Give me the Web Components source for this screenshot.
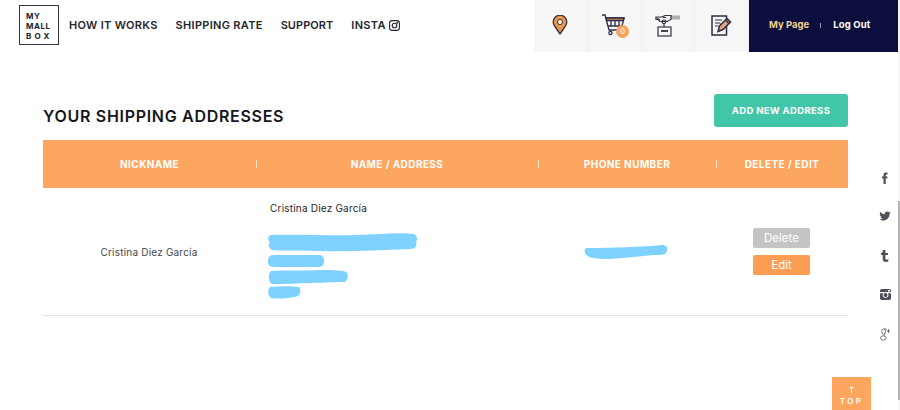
<!DOCTYPE html>
<html>
<head>
<meta charset="utf-8">
<style>
html, body { margin: 0; padding: 0; background: #fff; overflow: hidden; }
body { width: 900px; height: 410px; font-family: Inter, "Liberation Sans", sans-serif; color: #1b1b22; position: relative; }
</style>
</head>
<body>
<site-header></site-header>
<address-page></address-page>
<social-rail></social-rail>
<top-button></top-button>
<fake-scrollbar></fake-scrollbar>

<script>
class SiteHeader extends HTMLElement {
    constructor() {
        super();
        this.attachShadow({ mode: 'open' });
    }

    connectedCallback() {
        this.shadowRoot.innerHTML = `
            <style>
                :host { display: flex; height: 52px; width: 898px; padding-left: 19px; box-sizing: border-box; align-items: flex-start; }
                .logo {
                    width: 40px; height: 40px; margin-top: 5px; box-sizing: border-box;
                    border: 1px solid #33334a; padding: 5px 0 0 6px;
                    font-size: 8px; font-weight: 700; line-height: 10px; color: #22222c; letter-spacing: .5px;
                }
                .logo .wide { letter-spacing: 3.2px; }
                nav { display: flex; gap: 18px; margin-left: 10px; height: 50px; align-items: center; font-size: 11px; font-weight: 600; letter-spacing: .3px; color: #26262e; white-space: nowrap; }
                nav span { display: flex; align-items: center; gap: 3px; }
                nav .tight { letter-spacing: .05px; }
                .right { display: flex; margin-left: auto; height: 52px; }
                .account {
                    width: 149px; background: #0c0f3e; display: flex; align-items: center; padding: 0 0 4px 20px; box-sizing: border-box;
                    font-size: 9.5px; font-weight: 700; color: #fff; white-space: nowrap; letter-spacing: .15px;
                }
                .account b { color: #eed48c; font-weight: 700; letter-spacing: 0; }
                .account i { width: 1px; height: 5px; background: #9a9ab0; margin: 2px 12px 0 11px; }
            </style>
            <div class="logo">MY<br>MALL<br><span class="wide">BOX</span></div>
            <nav>
                <span>HOW IT WORKS</span>
                <span>SHIPPING RATE</span>
                <span class="tight">SUPPORT</span>
                <span>INSTA
                    <svg width="11" height="11" viewBox="0 0 11 11" fill="none" stroke="#26262e" stroke-width="1.1"><rect x=".6" y=".6" width="9.8" height="9.8" rx="2.6"/><circle cx="5.5" cy="5.5" r="2.3"/><circle cx="8.2" cy="2.8" r=".4"/></svg>
                </span>
            </nav>
            <div class="right">
                <icon-cell>
                    <svg width="16" height="20" viewBox="0 0 16 20"><path d="M8 19C5 14 1.2 10.8 1.2 7A6.8 6.8 0 0 1 14.8 7C14.8 10.8 11 14 8 19Z" fill="#e8954f" stroke="#33303a" stroke-width="1.3"/><circle cx="8" cy="7" r="2.6" fill="#fbf3ea" stroke="#33303a" stroke-width="1"/></svg>
                </icon-cell>
                <icon-cell>
                    <span style="position:relative;display:block;width:30px;height:22px;left:2px">
                        <svg width="28" height="22" viewBox="0 0 28 22" fill="none" stroke="#2c2c44" stroke-width="1.3" style="position:absolute;left:0;top:0"><path d="M1 1H4L8 16H20"/><path d="M5 4H23L21 12H7.2"/><path d="M5 4H23L22.4 6.5H5.7Z" fill="#d9925a"/><path d="M10 7V12M14 7V12M18 7V12"/><circle cx="9.5" cy="19" r="1.6"/><circle cx="18" cy="19" r="1.6"/></svg>
                        <span style="position:absolute;left:15px;top:11px;width:13px;height:13px;border-radius:50%;background:#f9a259;color:#fff;font-size:7.5px;line-height:13px;text-align:center;font-weight:500">0</span>
                    </span>
                </icon-cell>
                <icon-cell>
                    <svg width="26" height="23" viewBox="0 0 26 23" fill="none" stroke="#33333c" stroke-width="1.2"><path d="M15 1.500H25V5.500H16Z" fill="#b0b0b0" stroke="none"/><path d="M1 3H7L10 1.500H16V5.500L12 7.500H5L3 5.500H1Z" fill="#f2f2f2"/><path d="M2 4.500L5 5.500M8 3.500L11 3.500"/><circle cx="9" cy="7.800" r="1.800"/><path d="M9 9.500V13"/><rect x="3" y="13" width="13" height="9"/><path d="M6 17H13" stroke-width="1.800"/></svg>
                </icon-cell>
                <icon-cell>
                    <svg width="21" height="21" viewBox="0 0 21 21" fill="none" stroke="#2c2c44" stroke-width="1.500"><path d="M15.500 9V20H1V1H15.500V4"/><path d="M4 5H11M4 8H9.500M4 11H7.500" stroke-width="1.100"/><path d="M7 16.500L8.500 11L16 3.500L19.500 7L12 14.500Z" fill="#e3a47c"/><path d="M14.500 5L18 8.500"/></svg>
                </icon-cell>
                <div class="account"><b>My Page</b><i></i>Log Out</div>
            </div>
        `;
    }
}

class IconCell extends HTMLElement {
    constructor() {
        super();
        this.attachShadow({ mode: 'open' }).innerHTML = `
            <style>
                :host { display: flex; width: 53.75px; height: 52px; background: #f6f6f6; align-items: center; justify-content: center; padding-bottom: 2px; box-sizing: border-box; border-right: 1px solid #eeeeee; }
            </style>
            <slot></slot>
        `;
    }
}

class AddressPage extends HTMLElement {
    constructor() {
        super();
        this.attachShadow({ mode: 'open' });
    }

    connectedCallback() {
        this.shadowRoot.innerHTML = `
            <style>
                :host { display: block; width: 805px; margin: 42px 0 0 43px; }
                .top { display: flex; justify-content: space-between; align-items: flex-end; height: 33px; margin-bottom: 13px; }
                h1 { margin: 0 0 1px; font-size: 16px; line-height: 20px; font-weight: 600; letter-spacing: .7px; color: #15151c; }
                button {
                    width: 134px; height: 33px; border: 0; padding: 0; border-radius: 3px; background: #41c7a8; color: #fff;
                    font: 700 9.5px Inter, "Liberation Sans", sans-serif; letter-spacing: .33px;
                }
            </style>
            <div class="top">
                <h1>YOUR SHIPPING ADDRESSES</h1>
                <button>ADD NEW ADDRESS</button>
            </div>
            <table-head></table-head>
            <address-row nickname="Cristina Diez García"></address-row>
        `;
    }
}

class TableHead extends HTMLElement {
    constructor() {
        super();
        this.attachShadow({ mode: 'open' }).innerHTML = `
            <style>
                :host {
                    display: grid; grid-template-columns: 213px 282px 178px 132px; height: 48px; background: #fca65f; align-items: center;
                    color: #fff; font-size: 10px; font-weight: 700; letter-spacing: .42px; text-align: center;
                }
                div { position: relative; }
                div + div::before { content: ""; position: absolute; left: 0; top: 2px; width: 1px; height: 8px; background: #ffe3c8; }
            </style>
            <div>NICKNAME</div>
            <div>NAME / ADDRESS</div>
            <div>PHONE NUMBER</div>
            <div>DELETE / EDIT</div>
        `;
    }
}

class AddressRow extends HTMLElement {
    constructor() {
        super();
        this.attachShadow({ mode: 'open' });
    }

    connectedCallback() {
        const name = this.getAttribute('nickname');
        this.shadowRoot.innerHTML = `
            <style>
                :host {
                    display: grid; grid-template-columns: 213px 282px 178px 132px; height: 128px; box-sizing: border-box;
                    border-bottom: 1px solid #e4e4e4; font-size: 10px; color: #3a3a42; align-items: center;
                }
                .nick { text-align: center; padding-right: 1px; color: #46464c; letter-spacing: .2px; }
                .addr { align-self: start; padding: 14px 0 0 14px; }
                .addr p { margin: 0 0 19px; line-height: 12px; color: #26262c; letter-spacing: .2px; }
                .addr svg, .phone svg { display: block; }
                .addr svg { margin-left: -2px; }
                .phone { padding-left: 46px; padding-top: 2px; }
                .actions { display: flex; flex-direction: column; gap: 7px; padding: 0 0 0 37px; }
                .actions span { display: block; width: 57px; height: 20px; line-height: 20px; border-radius: 2px; text-align: center; color: #fff; font-size: 11.5px; }
                .del { background: #c4c4c4; }
                .edit { background: #fd9c53; }
            </style>
            <div class="nick">${name}</div>
            <div class="addr">
                <p>${name}</p>
                <svg width="150" height="67" viewBox="0 0 150 67" fill="#7fd2ff">
                    <path d="M3 2C30 1 60 3 90 2C110 1 135 -1 146 1C149 2 150 7 148 9C149 12 148 16 143 16C110 17 80 19 50 18C30 17 12 18 4 17C0 15 0 11 2 9C-1 6 0 3 3 2Z"/>
                    <rect x="0" y="22" width="56" height="12" rx="5"/>
                    <path d="M3 38C20 37 40 38 50 37C60 37 75 37 78 39C81 41 80 47 77 49C60 49 30 51 4 51C0 49 0 40 3 38Z"/>
                    <path d="M2 54C10 53 25 53 31 54C33 56 33 61 30 63C20 66 8 66 3 65C-1 62 0 56 2 54Z"/>
                </svg>
            </div>
            <div class="phone">
                <svg width="84" height="15" viewBox="0 0 84 15" fill="#7fd2ff"><path d="M3 3C25 3 60 2 78 0C83 0 84 3 83 6C82 10 78 10 70 10C55 11 45 13 25 14C12 14 3 13 1 8C0 5 1 3 3 3Z"/></svg>
            </div>
            <div class="actions">
                <span class="del">Delete</span>
                <span class="edit">Edit</span>
            </div>
        `;
    }
}

class SocialRail extends HTMLElement {
    constructor() {
        super();
        this.attachShadow({ mode: 'open' }).innerHTML = `
            <style>
                :host { position: absolute; left: 877px; top: 172px; width: 16px; display: flex; flex-direction: column; align-items: center; }
                div { height: 39px; display: flex; justify-content: center; align-items: flex-start; }
                svg { display: block; }
            </style>
            <div><svg width="10" height="12" viewBox="0 0 10 12" fill="#50505a"><path d="M3.5 12V6.6H2V4.6H3.5V3C3.5 1.2 4.5 .5 6 .5H7.5V2.4H6.6C5.9 2.4 5.7 2.7 5.7 3.3V4.6H7.5L7.2 6.6H5.7V12Z"/></svg></div>
            <div><svg width="12" height="12" viewBox="0 0 24 24" fill="#50505a" style="margin-top:-1px"><path d="M23 4.9c-.8.4-1.7.6-2.6.8.9-.6 1.6-1.4 2-2.5-.9.5-1.9.9-2.9 1.1A4.6 4.6 0 0 0 11.700 8.500C7.900 8.300 4.500 6.500 2.200 3.700c-1.200 2.100-.6 4.800 1.400 6.100-.7 0-1.400-.2-2-.6 0 2.200 1.600 4.100 3.700 4.600-.7.200-1.400.2-2.100.1.600 1.800 2.300 3.100 4.300 3.200A9.300 9.300 0 0 1 .8 19c2 1.300 4.500 2.100 7.100 2.100 8.600 0 13.500-7.300 13.200-13.800.9-.7 1.700-1.500 1.900-2.400z"/></svg></div>
            <div><svg width="10" height="12" viewBox="0 0 10 12" fill="#50505a"><path d="M3 0H5.400V2.900H8V5H5.400V8.400C5.400 9.400 6.200 9.800 8.300 9.200V11.400C5.300 12.500 2.700 11.800 2.700 9V5H1V3.400C2.400 2.900 2.900 1.500 3 0Z"/></svg></div>
            <div><svg width="11" height="11" viewBox="0 0 11 11"><rect width="11" height="11" rx="1.800" fill="#50505a"/><rect x="0" y="3" width="11" height="1.200" fill="#fff"/><circle cx="5.500" cy="6" r="2.500" fill="#50505a" stroke="#fff" stroke-width="1"/><rect x="8" y="1" width="2" height="1.500" fill="#fff"/></svg></div>
            <div><svg width="11" height="13" viewBox="0 0 11 13" fill="none" stroke="#6a6a72" stroke-width=".9"><ellipse cx="3.600" cy="3.500" rx="2" ry="2.600"/><ellipse cx="3.300" cy="10" rx="2.800" ry="2.200"/><path d="M5.200 5.500C3.800 6.500 3.600 7 5 8M4 1H6.500M8.500 1V5M6.800 3H10.300"/></svg></div>
        `;
    }
}

class TopButton extends HTMLElement {
    constructor() {
        super();
        this.attachShadow({ mode: 'open' }).innerHTML = `
            <style>
                :host {
                    position: absolute; left: 832px; top: 377px; width: 39px; height: 33px; background: #fca65f; color: #fff;
                    display: flex; flex-direction: column; align-items: center; padding-top: 9px; box-sizing: border-box;
                    font-size: 8px; font-weight: 600; letter-spacing: 2.4px; line-height: 9px;
                }
                svg { display: block; margin-bottom: 4px; }
            </style>
            <svg width="5" height="7" viewBox="0 0 5 7" fill="none" stroke="#fff"><path d="M2.500 7V1M.7 2.500L2.500 .7L4.300 2.500"/></svg>
            <span>TOP</span>
        `;
    }
}

class FakeScrollbar extends HTMLElement {
    constructor() {
        super();
        this.attachShadow({ mode: 'open' }).innerHTML = `
            <style>
                :host { position: absolute; left: 898px; top: 0; width: 2px; height: 410px; background: #f4f4f4; }
                div { position: absolute; left: 0; top: 201px; width: 2px; height: 199px; background: #b4b4b4; }
            </style>
            <div></div>
        `;
    }
}

customElements.define('icon-cell', IconCell);
customElements.define('site-header', SiteHeader);
customElements.define('table-head', TableHead);
customElements.define('address-row', AddressRow);
customElements.define('address-page', AddressPage);
customElements.define('social-rail', SocialRail);
customElements.define('top-button', TopButton);
customElements.define('fake-scrollbar', FakeScrollbar);
</script>
</body>
</html>
